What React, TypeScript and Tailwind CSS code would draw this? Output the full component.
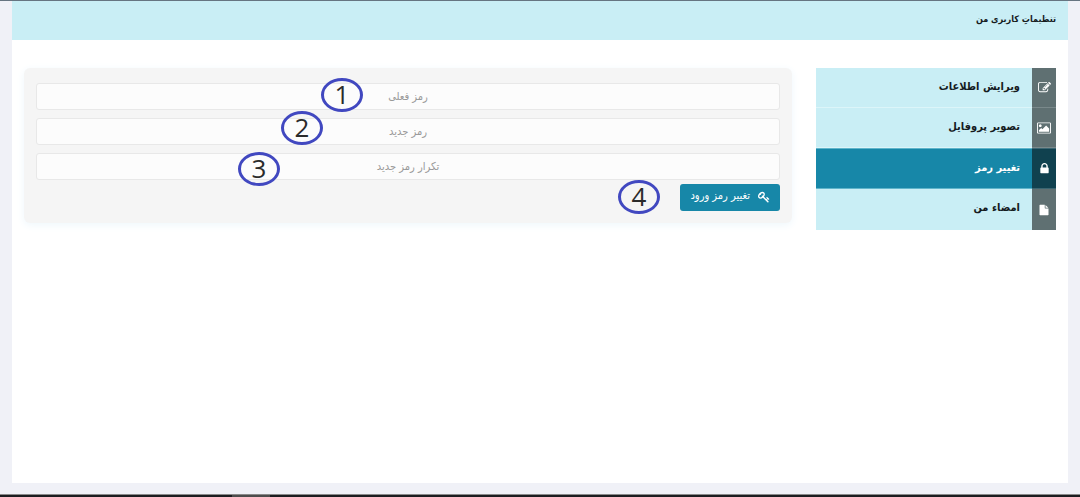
import type { ReactNode } from "react";

type IconProps = { d: string; viewBox?: string; className?: string };

function Glyph({ d, viewBox = "0 0 1792 1792", className = "size-3.5" }: IconProps) {
  return (
    <svg viewBox={viewBox} className={className} fill="currentColor" aria-hidden="true">
      <path d={d} />
    </svg>
  );
}

const EDIT =
  "M888 1184l116-116-152-152-116 116v56h96v96h56zm440-720q-16-16-33 1l-350 350q-17 17-1 33t33-1l350-350q17-17 1-33zm80 594v190q0 119-84.5 203.5t-203.5 84.5h-832q-119 0-203.5-84.5t-84.5-203.5v-832q0-119 84.5-203.5t203.5-84.5h832q63 0 117 25 15 7 18 23 3 17-9 29l-49 49q-14 14-32 8-23-6-45-6h-832q-66 0-113 47t-47 113v832q0 66 47 113t113 47h832q66 0 113-47t47-113v-126q0-13 9-22l64-64q15-15 35-7t20 29zm-96-738l288 288-672 672h-288v-288zm444 132l-92 92-288-288 92-92q28-28 68-28t68 28l152 152q28 28 28 68t-28 68z";
const PICTURE =
  "M576 576q0 80-56 136t-136 56-136-56-56-136 56-136 136-56 136 56 56 136zm1024 384v448h-1408v-192l320-320 160 160 512-512zm96-704h-1600q-13 0-22.5 9.5t-9.5 22.5v1216q0 13 9.5 22.5t22.5 9.5h1600q13 0 22.5-9.5t9.5-22.5v-1216q0-13-9.5-22.5t-22.5-9.5zm160 32v1216q0 66-47 113t-113 47h-1600q-66 0-113-47t-47-113v-1216q0-66 47-113t113-47h1600q66 0 113 47t47 113z";
const LOCK =
  "M640 768h512v-192q0-106-75-181t-181-75-181 75-75 181v192zm832 96v576q0 40-28 68t-68 28h-960q-40 0-68-28t-28-68v-576q0-40 28-68t68-28h32v-192q0-184 132-316t316-132 316 132 132 316v192h32q40 0 68 28t28 68z";
const FILE =
  "M1152 512v-472q22 14 36 28l408 408q14 14 28 36h-472zm-128 32q0 40 28 68t68 28h544v1056q0 40-28 68t-68 28h-1344q-40 0-68-28t-28-68v-1600q0-40 28-68t68-28h800v544z";
const KEY =
  "M832 512q0-80-56-136t-136-56-136 56-56 136q0 42 19 83-41-19-83-19-80 0-136 56t-56 136 56 136 136 56 136-56 56-136q0-42-19-83 41 19 83 19 80 0 136-56t56-136zm851 704q0 17-49 66t-66 49q-9 0-28.5-16t-36.5-33-38.5-40-24.5-26l-96 96 220 220q28 28 28 68 0 42-39 81t-81 39q-40 0-68-28l-671-671q-176 131-365 131-163 0-265.5-102.5t-102.5-265.5q0-160 95-313t248-248 313-95q163 0 265.5 102.5t102.5 265.5q0 189-131 365l355 355 96-96q-3-3-26-24.5t-40-38.5-33-36.5-16-28.5q0-17 49-66t66-49q13 0 23 10 6 6 46 44.5t82 79.5 86.5 86 73 78 28.5 41z";

const menu: { label: string; icon: ReactNode; active?: boolean }[] = [
  { label: "ویرایش اطلاعات", icon: <Glyph d={EDIT} className="size-[13px]" /> },
  { label: "تصویر پروفایل", icon: <Glyph d={PICTURE} viewBox="-64 0 1920 1792" /> },
  { label: "تغییر رمز", icon: <Glyph d={LOCK} className="size-[13px]" />, active: true },
  { label: "امضاء من", icon: <Glyph d={FILE} viewBox="0 -128 1792 2048" className="size-3" /> },
];

const fields = ["رمز فعلی", "رمز جدید", "تکرار رمز جدید"];

const marks = [
  { n: 1, place: "left-[297px] top-[10px]" },
  { n: 2, place: "left-[257px] top-[43px]" },
  { n: 3, place: "left-[214px] top-[84px]" },
  { n: 4, place: "left-[594px] top-[112px]" },
];

export default function App() {
  return (
    <div
      dir="rtl"
      className="flex min-h-screen flex-col border-t border-[#667581] bg-[#f0f1f7] font-['DejaVu_Sans_Condensed','DejaVu_Sans',sans-serif] text-[#151b1e]"
    >
      <main className="mx-3 mb-[11px] flex-1 bg-white">
        <header className="flex h-[39px] items-center bg-[#c9eef5] px-3 pb-0.5">
          <h1 className="text-[9px] font-bold">تنظیماتِ کاربری من</h1>
        </header>

        <div className="flex items-start gap-6 px-3 pt-7">
          <nav className="w-60 shrink-0">
            <ul>
              {menu.map((item) => (
                <li key={item.label} className="group">
                  <a
                    href="#"
                    aria-current={item.active ? "page" : undefined}
                    className={
                      item.active
                        ? "flex h-[41px] bg-[#1787a8] text-white"
                        : "flex h-10 bg-[#c9eef5] group-last:h-[41px]"
                    }
                  >
                    <span
                      className={
                        item.active
                          ? "flex w-6 items-center justify-center border-y border-[#3b6672] bg-[#10414f] text-white"
                          : "flex w-6 items-center justify-center border-b border-[#7a898b] bg-[#5f7072] text-white group-last:border-b-0"
                      }
                    >
                      {item.icon}
                    </span>
                    <span
                      className={
                        item.active
                          ? "flex-1 border-y border-[#5fb5cb] px-3 pt-[9px] text-[11px] leading-5 font-bold"
                          : "flex-1 border-b border-[#dcf5f9] px-3 pt-[9px] text-[11px] leading-5 font-bold group-last:border-b-0"
                      }
                    >
                      {item.label}
                    </span>
                  </a>
                </li>
              ))}
            </ul>
          </nav>

          <form
            className="relative min-w-0 flex-1 rounded-md bg-[#f5f5f5] px-3 pt-[15px] pb-3 shadow-[0_2px_8px_#eef7fc]"
            onSubmit={(e) => e.preventDefault()}
          >
            {fields.map((label) => (
              <input
                key={label}
                type="password"
                aria-label={label}
                placeholder={label}
                className="mb-2 block h-[27px] w-full rounded-[3px] border border-[#e8e8e8] bg-[#fcfcfc] text-center text-[11px] placeholder:text-[#999999]"
              />
            ))}
            <button
              type="submit"
              className="-mt-1 flex h-[27px] items-center gap-2 rounded-[3px] bg-[#1787a8] px-2.5 pb-0.5 text-[11px] text-white"
            >
              <Glyph d={KEY} className="size-3" />
              تغییر رمز ورود
            </button>

            {marks.map((m) => (
              <span
                key={m.n}
                className={`absolute flex h-[34px] w-[42px] items-center justify-center rounded-[50%] border-[3px] border-[#4148c0] pb-0.5 font-['Open_Sans',sans-serif] text-[26px] leading-none text-[#2b2b2b] ${m.place}`}
              >
                {m.n}
              </span>
            ))}
          </form>
        </div>
      </main>
      <footer className="h-[3px] border-t border-[#8a8a8a] bg-[#1c1d20]">
        <div dir="ltr" className="flex h-full">
          <div className="ms-[232px] w-[38px] bg-[#4c4c4c]" />
        </div>
      </footer>
    </div>
  );
}
